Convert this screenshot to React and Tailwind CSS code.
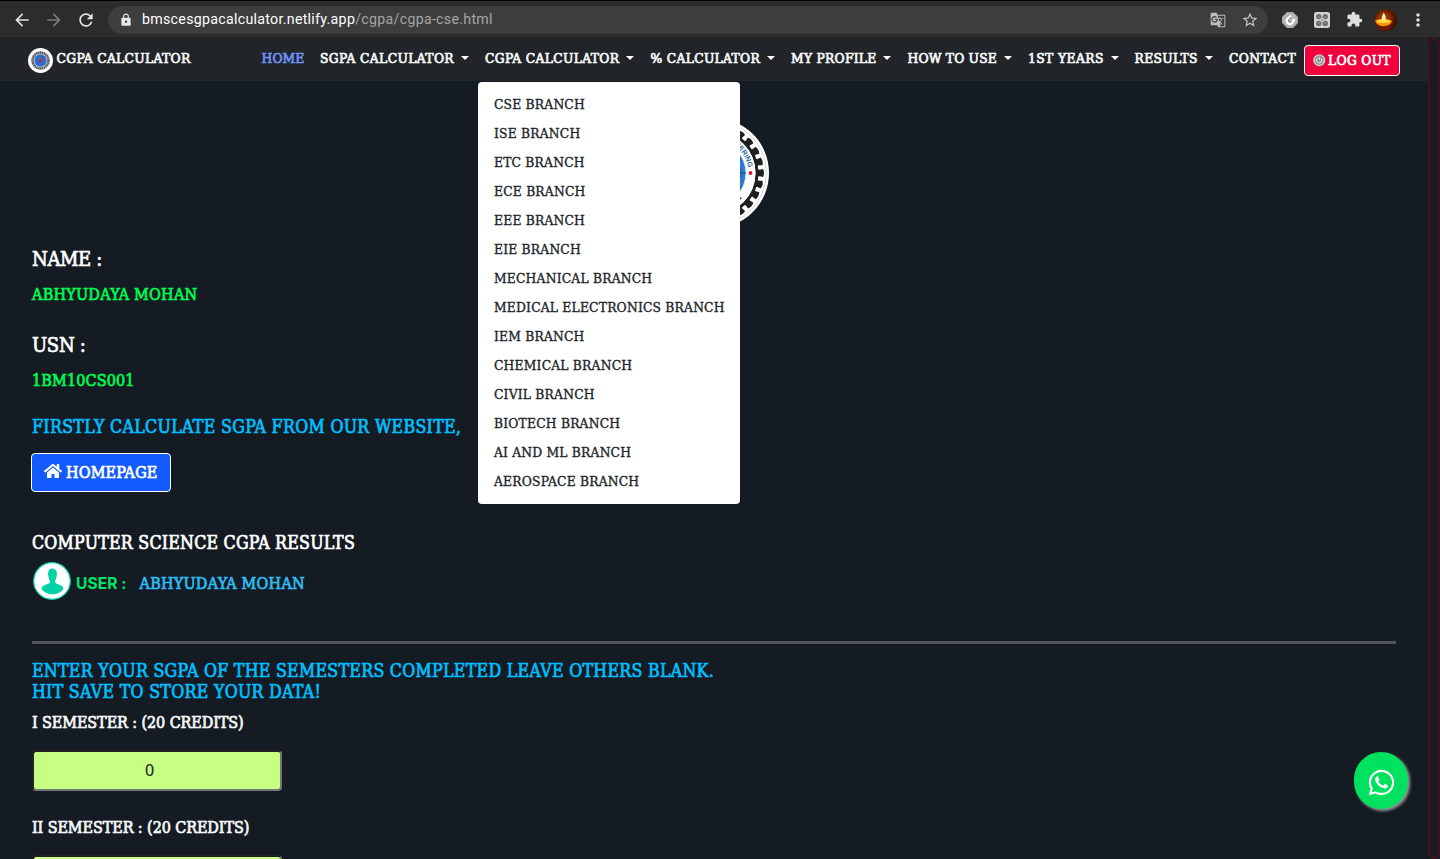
import {
  MdArrowBack,
  MdArrowForward,
  MdExtension,
  MdGTranslate,
  MdLock,
  MdMoreVert,
  MdRefresh,
  MdStarBorder,
} from 'react-icons/md'
import { FaHome, FaWhatsapp } from 'react-icons/fa'

const NAV = [
  { label: 'HOME', box: 'w-[58.5px]', text: 'text-[#6f93f8] tracking-[0.14px]' },
  { label: 'SGPA CALCULATOR', box: 'w-[165px]', text: 'tracking-[0.38px]', caret: true },
  { label: 'CGPA CALCULATOR', box: 'w-[165.5px]', text: 'tracking-[0.33px]', caret: true, menu: true },
  { label: '% CALCULATOR', box: 'w-[140.5px]', text: 'tracking-[0.31px]', caret: true },
  { label: 'MY PROFILE', box: 'w-[116.5px]', text: 'tracking-[0.27px]', caret: true },
  { label: 'HOW TO USE', box: 'w-[120.5px]', text: 'tracking-[0.21px]', caret: true },
  { label: '1ST YEARS', box: 'w-[106.5px]', text: 'tracking-[0.42px]', caret: true },
  { label: 'RESULTS', box: 'w-[94.5px]', text: 'tracking-[0.37px]', caret: true },
  { label: 'CONTACT', box: 'w-[75px]', text: 'tracking-[0.39px]' },
]

const BRANCHES = [
  'CSE', 'ISE', 'ETC', 'ECE', 'EEE', 'EIE', 'MECHANICAL', 'MEDICAL ELECTRONICS',
  'IEM', 'CHEMICAL', 'CIVIL', 'BIOTECH', 'AI AND ML', 'AEROSPACE',
]

function BrowserBar() {
  return (
    <div className="flex h-[38px] items-center border-t border-black bg-[#2c2c2c] font-[Roboto,sans-serif] shadow-[inset_0_-1px_0_#222]">
      <MdArrowBack className="ml-[12px] size-[20px] text-[#e4e4e4]" />
      <MdArrowForward className="ml-[12px] size-[20px] text-[#7b7b7b]" />
      <MdRefresh className="ml-[12px] size-[20px] text-[#e4e4e4]" />
      <div className="ml-[12px] flex h-[28px] w-[1160px] items-center rounded-full bg-[#3d3d3d] pl-[11px] pr-[9px]">
        <MdLock className="size-[14px] text-[#e6e6e6]" />
        <div className="ml-[9px] flex-1 whitespace-nowrap text-[14.2px] tracking-[0.29px] text-[#a5a5a5]">
          <span className="text-white">bmscesgpacalculator.netlify.app</span>/cgpa/cgpa-cse.html
        </div>
        <MdGTranslate className="size-[16px] text-[#bdbdbd]" />
        <MdStarBorder className="ml-[15px] size-[18px] text-[#c4c4c4]" />
      </div>
      <svg className="ml-[14px] size-[16px]" viewBox="0 0 16 16">
        <path d="M5 0h6l5 5v6l-5 5H5l-5-5V5z" fill="#a9a9a9" />
        <circle cx="8" cy="8" r="7.2" fill="#b4b4b4" />
        <path d="M9.200 3.600 6.200 6.400a3 3 0 1 0 4.600 3.200l1.600-2.600" fill="none" stroke="#fff" strokeWidth="2.600" />
        <path d="m9.600 4.800-2.600 2.600a1.600 1.600 0 1 0 2.500 1.600" fill="none" stroke="#6c6c6c" strokeWidth="0.900" />
      </svg>
      <svg className="ml-[16px] size-[16px]" viewBox="0 0 16 16">
        <rect width="16" height="16" rx="2.5" fill="#d2d2d2" />
        <g fill="#6c6c6c">
          <circle cx="4.8" cy="4.6" r="2.7" />
          <circle cx="11.2" cy="4.6" r="2.7" />
          <circle cx="4.8" cy="11.4" r="2.7" />
          <circle cx="11.2" cy="11.4" r="2.7" />
        </g>
        <path d="m4 4 8 8M12 4l-8 8" stroke="#999" strokeWidth="1" />
      </svg>
      <MdExtension className="ml-[16px] size-[17px] text-[#dedede]" />
      <svg className="ml-[12px] size-[22px]" viewBox="0 0 22 22">
        <defs>
          <clipPath id="avatar"><circle cx="11" cy="11" r="11" /></clipPath>
          <radialGradient id="glow" cx="0.4" cy="0.45" r="0.6">
            <stop offset="0" stopColor="#c24a00" />
            <stop offset="1" stopColor="#3b0b02" />
          </radialGradient>
        </defs>
        <g clipPath="url(#avatar)">
          <rect width="22" height="22" fill="url(#glow)" />
          <path d="M0 11.5c4-2 13-2 17 .5-1 3-4 5-8.500 5S1 15 0 11.500z" fill="#ff9100" />
          <ellipse cx="8.500" cy="12.300" rx="6.500" ry="1.700" fill="#ffd84a" />
          <path d="M8.700 3.500c2 3 2.600 5.500 1.600 8H7c-.8-3 .5-5.500 1.700-8z" fill="#fff2a8" />
          <path d="M1 17c5 2 11 2 15 0l-2 4H5z" fill="#7a1500" />
        </g>
      </svg>
      <MdMoreVert className="ml-[11px] size-[20px] text-[#e4e4e4]" />
    </div>
  )
}

function BrandIcon() {
  return (
    <svg className="size-[25px]" viewBox="0 0 25 25">
      <circle cx="12.500" cy="12.500" r="12.500" fill="#fff" />
      <circle cx="12.500" cy="12.500" r="9.300" fill="#a4a8ac" />
      <circle cx="12.500" cy="12.500" r="8" fill="none" stroke="#4f5358" strokeWidth="2.400" strokeDasharray="1.100 0.840" />
      <circle cx="12.500" cy="12.500" r="6.600" fill="#b5c2d2" />
      <circle cx="12.500" cy="12.500" r="6" fill="#2b6fcb" />
      <path d="m16 8.800-2.600 4.400-1.600-1.600z" fill="#f0222a" />
      <path d="m9.600 15.600 2.200-4 1.600 1.600z" fill="#a02a4c" />
    </svg>
  )
}

function CollegeLogo() {
  const teeth = Array.from({ length: 26 }, (_, i) => (i * 360) / 26)
  return (
    <svg className="size-[110px]" viewBox="0 0 110 110">
      <circle cx="55" cy="55" r="55" fill="#fff" />
      <circle cx="55" cy="55" r="52.300" fill="none" stroke="#aaa" strokeWidth="0.500" />
      <circle cx="55" cy="55" r="43" fill="none" stroke="#1f1f1f" strokeWidth="3" />
      {teeth.map((angle) => (
        <path
          key={angle}
          d="M97 50.500c1 0 1.500 1.300 3.500 1.300l3.500-.8q2 4 0 8l-3.500-.8c-2 0-2.500 1.300-3.500 1.300z"
          fill="#1f1f1f"
          transform={`rotate(${angle} 55 55)`}
        />
      ))}
      <circle cx="55" cy="55" r="41.500" fill="#fff" />
      <circle cx="55" cy="55" r="32" fill="#2c78d2" stroke="#dfe9f5" strokeWidth="1" />
      <g fill="none" stroke="#123f7c" strokeWidth="0.800">
        <path d="M23 55h64M27 42h56M27 69h56" />
        <ellipse cx="55" cy="55" rx="26" ry="32" />
      </g>
      <path id="ring" d="M20.500 55a34.500 34.500 0 0 1 69 0" fill="none" />
      <text className="font-['Liberation_Sans',sans-serif] text-[7px] font-bold [-webkit-text-stroke:0]" fill="#1e5c9e">
        <textPath href="#ring" startOffset="95%" textAnchor="end">ENGINEERING</textPath>
      </text>
      <circle cx="91.500" cy="55" r="1.900" fill="#e01b24" />
      <path d="m79 82 2-3.500 2 2.500z" fill="#1e5c9e" />
    </svg>
  )
}

function BranchMenu() {
  return (
    <ul className="absolute left-[-7px] top-[44px] z-10 w-[262px] rounded-[4px] bg-white py-[8px] pl-[16px] text-[13.7px] text-[#212529]">
      {BRANCHES.map((name) => (
        <li key={name} className="h-[29px] leading-[29px] tracking-[0.2px] [-webkit-text-stroke:0.35px]">
          {name} BRANCH
        </li>
      ))}
    </ul>
  )
}

function NavBar() {
  return (
    <nav className="flex h-[43px] bg-[#212529] pl-[28px] text-[13.7px] text-[#f8f9fa] [-webkit-text-stroke:0.7px]">
      <div className="flex w-[233.5px] pt-[10px]">
        <BrandIcon />
        <span className="ml-[3.5px] leading-[21px] tracking-[0.31px]">CGPA CALCULATOR</span>
      </div>
      {NAV.map((item) => (
        <div key={item.label} className={`relative flex items-start ${item.box}`}>
          <span className={`pt-[10px] leading-[21px] ${item.text}`}>{item.label}</span>
          {item.caret && (
            <span className="ml-[6.700px] mt-[17.500px] border-x-4 border-t-4 border-x-transparent border-t-white" />
          )}
          {item.menu && <BranchMenu />}
        </div>
      ))}
      <button className="mt-[7px] flex h-[31px] w-[96px] items-center rounded-[4px] border border-white bg-[#f0003c] pl-[8px] tracking-[0.3px] text-white">
        <svg className="mr-[2.500px] size-[12.500px]" viewBox="0 0 13 13">
          <circle cx="6.500" cy="6.500" r="6.300" fill="#c6c9ca" />
          <circle cx="6.500" cy="6.500" r="4.600" fill="#8e9294" />
          <path d="M4.600 4.500a2.800 2.800 0 1 0 3.800 0M6.500 3v3.200" fill="none" stroke="#eee" strokeWidth="1" />
        </svg>
        LOG OUT
      </button>
    </nav>
  )
}

function Semester({ name, value, className }) {
  return (
    <div className={className}>
      <label className="block h-[20px] leading-[20px] tracking-[-0.09px] text-[#f8f9fa]">
        {name} SEMESTER : (20 CREDITS)
      </label>
      <div className="mt-[17px] flex h-[41px] w-[250px] items-center justify-center rounded-[4px] border-2 border-b-[#767676] border-l-[#212122] border-r-[#767676] border-t-[#212122] bg-[#c6ff81] pr-[15px] pb-[1px] text-[16px] text-[#212529] [-webkit-text-stroke:0.2px]">
        <span className="font-['Noto_Sans',sans-serif]">{value}</span>
      </div>
    </div>
  )
}

export default function App() {
  return (
    <div className="h-[859px] w-[1440px] overflow-hidden bg-[#151b22] font-['DejaVu_Serif_Condensed','DejaVu_Serif',serif] whitespace-nowrap">
      <BrowserBar />
      <div className="flex h-[821px]">
        <div className="w-[1428px]">
          <NavBar />
          <main className="px-[32px] pt-[37px] text-[16px] [-webkit-text-stroke:0.7px]">
            <div className="flex justify-center">
              <CollegeLogo />
            </div>
            <h2 className="mt-[19px] h-[24px] text-[20px] leading-[24px] tracking-[-0.35px] text-white">NAME :</h2>
            <p className="mt-[14px] h-[20px] leading-[20px] tracking-[0.24px] text-[#00fa53]">ABHYUDAYA MOHAN</p>
            <h2 className="mt-[28px] h-[24px] text-[20px] leading-[24px] tracking-[-0.3px] text-white">USN :</h2>
            <p className="mt-[14px] h-[20px] leading-[20px] tracking-[0.15px] text-[#00fa53]">1BM10CS001</p>
            <h3 className="mt-[26px] h-[21px] text-[17.6px] leading-[21px] tracking-[0.33px] text-[#00bfff]">
              FIRSTLY CALCULATE SGPA FROM OUR WEBSITE,
            </h3>
            <button className="ml-[-1px] mt-[15px] flex h-[39px] w-[140px] items-center rounded-[4px] border border-white bg-[#145bff] pl-[12px] tracking-[0.15px] text-white">
              <FaHome className="mb-[3px] mr-[4px] size-[18px]" />
              HOMEPAGE
            </button>
            <h3 className="mt-[41px] h-[21px] text-[17.6px] leading-[21px] tracking-[0.25px] text-white">
              COMPUTER SCIENCE CGPA RESULTS
            </h3>
            <div className="mt-[8px] flex h-[38px] items-center pl-[1px]">
              <svg className="size-[38px]" viewBox="0 0 38 38">
                <circle cx="19" cy="19" r="18.300" fill="#fff" stroke="#00d2a8" strokeWidth="1.200" />
                <path
                  d="M19 6.500c3.300 0 5 2 4.900 5-.1 3-.6 5.100-1.700 6.700v2.600c1 1.200 3.500 1.500 5.800 2.700 2 1 2.500 2 2.300 3.800-2.300 3-6.300 5-10.800 5s-8.500-2-10.800-5c-.2-1.800.3-2.800 2.300-3.800 2.300-1.200 4.800-1.500 5.800-2.700v-2.600c-1.100-1.600-1.600-3.700-1.700-6.700-.1-3 1.600-5 3.900-5z"
                  fill="#00d2a8"
                />
              </svg>
              <span className="ml-[5px] mt-[5px] w-[63.500px] font-[Inter,sans-serif] text-[15.500px] font-bold tracking-[0.1px] text-[#00e56b] [-webkit-text-stroke:0]">
                USER :
              </span>
              <span className="mt-[6px] tracking-[0.24px] text-[#2cbdf5]">ABHYUDAYA MOHAN</span>
            </div>
            <div className="mt-[41px] h-[3px] bg-[#53555c]" />
            <h3 className="mt-[17px] text-[17.6px] leading-[21px] tracking-[0.3px] text-[#00bfff]">
              ENTER YOUR SGPA OF THE SEMESTERS COMPLETED LEAVE OTHERS BLANK.
              <br />
              HIT SAVE TO STORE YOUR DATA!
            </h3>
            <Semester name="I" value="0" className="mt-[10px]" />
            <Semester name="II" className="mt-[27px]" />
          </main>
        </div>
        <div className="w-[12px] rounded-[6px] bg-[#1a1a22] shadow-[inset_0_0_4px_#6b1018]" />
      </div>
      <div className="absolute left-[1354px] top-[752px] flex h-[57px] w-[54px] items-center justify-center rounded-full bg-[#00e15f] pt-[3px] shadow-[2px_2px_3px_#999]">
        <FaWhatsapp className="size-[29px] text-white" />
      </div>
    </div>
  )
}
